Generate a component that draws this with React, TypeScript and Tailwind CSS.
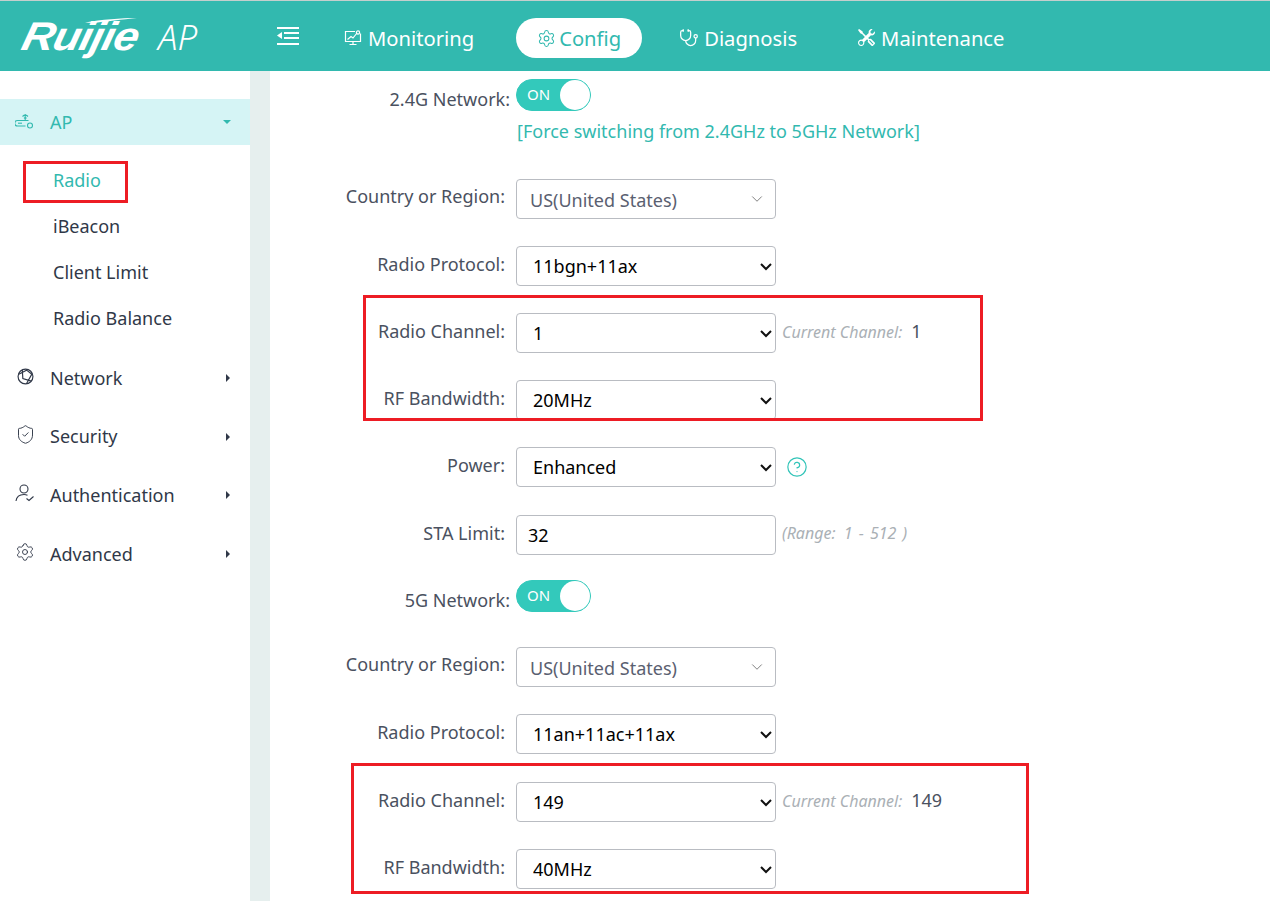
import { ChevronDown, CircleHelp, Settings, ShieldCheck, Stethoscope } from 'lucide-react'
import { BsTools } from 'react-icons/bs'

const FONT = "font-['Noto_Sans','Open_Sans',sans-serif]"

function MonitorIcon() {
  return (
    <svg width="18" height="16" viewBox="0 0 18 16" fill="none" stroke="currentColor" strokeWidth="1.2">
      <path d="M11 1.500H1.500v10h15v-8" />
      <path d="M3.500 9.500l3.500-3 2 1.500 4-5" />
      <circle cx="14" cy="2.500" r="1.600" />
      <path d="M9 11.500v3M5.500 14.500h7" />
    </svg>
  )
}

function CollapseIcon() {
  return (
    <svg width="24" height="18" viewBox="0 0 24 18" fill="white">
      <rect x="1" y="0" width="22" height="2" />
      <rect x="8" y="5" width="15" height="2" />
      <rect x="8" y="10" width="15" height="2" />
      <rect x="1" y="16" width="22" height="2" />
      <path d="M1 8.500L6 5v7z" />
    </svg>
  )
}

function LogoSwoosh() {
  return (
    <svg width="52" height="5" viewBox="0 0 52 5" fill="white">
      <path d="M0 4.500C16 1.500 36 0 52 0 38 1.500 20 3.500 8 5z" />
    </svg>
  )
}

function RouterIcon() {
  return (
    <svg width="19" height="17" viewBox="0 0 19 17" fill="none" stroke="currentColor" strokeWidth="1.100">
      <path d="M10.500 13H2.500a2.300 2.300 0 0 1 0-5.500h11" />
      <path d="M3 10.200h4" />
      <path d="M7.500 3.500a4 4 0 0 1 5.500 0M9 5.300a1.800 1.800 0 0 1 2.500 0M10.200 1v6" />
      <circle cx="15" cy="12.500" r="2.500" />
    </svg>
  )
}

function GlobeIcon() {
  return (
    <svg width="17" height="17" viewBox="0 0 16 16" fill="none" stroke="currentColor" strokeWidth="1.100">
      <circle cx="8" cy="8" r="7" />
      <path d="M5 1.800L5.500 10l8 2.300M1.200 6.200L9 2l5 3.800-5 8.800" />
    </svg>
  )
}

function UserCheckIcon() {
  return (
    <svg width="20" height="18" viewBox="0 0 20 18" fill="none" stroke="currentColor" strokeWidth="1.100">
      <circle cx="9" cy="5" r="4" />
      <path d="M1 17c.5-4 3.500-6.500 8-6.500 1.500 0 2.500.3 3.500.8" />
      <path d="M11.500 14.500l2.500 2 4.500-4" />
    </svg>
  )
}

function CaretRight() {
  return <span className="mr-[20px] ml-auto h-0 w-0 border-y-[4px] border-l-[4px] border-y-transparent border-l-[#303848]" />
}

function SideGroup({ label, icon, className }: { label: string; icon: React.ReactNode; className?: string }) {
  return (
    <div className={`flex h-[58.6px] items-center text-[#303848] ${className ?? ''}`}>
      <span className="flex w-[50px] -translate-y-[2px] justify-center">{icon}</span>
      <span>{label}</span>
      <CaretRight />
    </div>
  )
}

function FieldLabel({ children, className }: { children: string; className?: string }) {
  return <label className={`shrink-0 text-right text-[#4a5160] ${className ?? 'mt-[5px] w-[235px]'}`}>{children}</label>
}

function NativeSelect({ value }: { value: string }) {
  return (
    <div className="relative h-[40px] w-[260px] shrink-0">
      <select
        defaultValue={value}
        className="h-full w-full appearance-none rounded-[4px] border border-[#b9bcc2] bg-white pl-[16px] text-black outline-none"
      >
        <option>{value}</option>
      </select>
      <svg className="absolute top-[17px] right-[4px]" width="12" height="8" viewBox="0 0 12 8" fill="none" stroke="#111" strokeWidth="2">
        <path d="M1 1l5 5 5-5" />
      </svg>
    </div>
  )
}

function SelectRow({ label, value, note, className }: { label: string; value: string; note?: React.ReactNode; className: string }) {
  return (
    <div className={`flex h-[40px] gap-[11px] ${className}`}>
      <FieldLabel>{label + ':'}</FieldLabel>
      <NativeSelect value={value} />
      {note}
    </div>
  )
}

function CountryRow({ className }: { className: string }) {
  return (
    <div className={`flex h-[40px] gap-[11px] ${className}`}>
      <FieldLabel className="mt-[4px] w-[235px]">Country or Region:</FieldLabel>
      <div className="flex h-[40px] w-[260px] items-center justify-between rounded-[4px] border border-[#b9bcc2] bg-white pr-[9px] pl-[13px] text-[#5a6070]">
        <span className="mt-[2px]">US(United States)</span>
        <ChevronDown size={18} strokeWidth={1.100} className="text-[#666]" />
      </div>
    </div>
  )
}

function ToggleRow({ label, className }: { label: string; className?: string }) {
  return (
    <div className={`flex h-[32px] gap-[6px] ${className ?? ''}`}>
      <FieldLabel className="mt-[7px] w-[240px]">{label}</FieldLabel>
      <div className="flex h-[32px] w-[75px] items-center justify-between rounded-full border border-[#33c9bb] bg-[#33c9bb] pl-[10px] text-[15px] text-white">
        <span className="-mt-[2px]">ON</span>
        <span className="h-[30px] w-[30px] rounded-full bg-white" />
      </div>
    </div>
  )
}

function ChannelNote({ value }: { value: string }) {
  return (
    <div className="-ml-[5px] flex items-start gap-[9px]">
      <span className="mt-[7px] text-[16px] text-[#aab0b5] italic">Current Channel:</span>
      <span className="mt-[5px] text-[#4a5160]">{value}</span>
    </div>
  )
}

export default function App() {
  return (
    <div className={`${FONT} relative h-[901px] w-[1270px] overflow-hidden bg-white text-[18px]`}>
      <header className="flex h-[71px] items-center border-t border-[#c4cfcd] bg-[#32b9af] text-white">
        <div className="relative flex w-[276px] items-center pl-[23px]">
          <span className="w-[135px] origin-left scale-x-[1.120] -skew-x-12 font-['Liberation_Sans',sans-serif] text-[40px] leading-none font-black tracking-[-1px] italic">
            Ruijie
          </span>
          <span className="text-[35px] leading-none font-light italic">AP</span>
          <span className="absolute top-[2px] left-[85px] leading-none">
            <LogoSwoosh />
          </span>
        </div>
        <CollapseIcon />
        <nav className="mt-[4px] ml-[44px] flex items-center text-[20.200px]">
          <a className="flex items-center gap-[6px]">
            <MonitorIcon />
            <span>Monitoring</span>
          </a>
          <a className="ml-[42px] flex h-[40px] w-[126px] items-center justify-center gap-[3px] rounded-full bg-white text-[#32b9af]">
            <Settings size={19} strokeWidth={1.300} />
            <span>Config</span>
          </a>
          <a className="ml-[37px] flex items-center gap-[5px]">
            <Stethoscope size={20} strokeWidth={1.500} />
            <span>Diagnosis</span>
          </a>
          <a className="ml-[61px] flex items-center gap-[6px]">
            <BsTools size={17} />
            <span>Maintenance</span>
          </a>
        </nav>
      </header>

      <div className="flex h-[830px]">
        <aside className="w-[250px] shrink-0 pt-[28px]">
          <div className="flex h-[46px] items-center bg-[#d5f4f5] text-[#32b9af]">
            <span className="flex w-[50px] -translate-y-[1px] justify-center pr-[2px]">
              <RouterIcon />
            </span>
            <span>AP</span>
            <span className="mr-[19px] ml-auto h-0 w-0 border-x-[4px] border-t-[4px] border-x-transparent border-t-[#32b9af]" />
          </div>
          <ul className="mt-[12px] pl-[53px] text-[#303848]">
            <li className="flex h-[46px] items-center text-[#32b9af]">Radio</li>
            <li className="flex h-[46px] items-center">iBeacon</li>
            <li className="flex h-[46px] items-center">Client Limit</li>
            <li className="flex h-[46px] items-center">Radio Balance</li>
          </ul>
          <SideGroup className="mt-[8px]" label="Network" icon={<GlobeIcon />} />
          <SideGroup label="Security" icon={<ShieldCheck size={21} strokeWidth={1.100} />} />
          <SideGroup label="Authentication" icon={<UserCheckIcon />} />
          <SideGroup label="Advanced" icon={<Settings size={20} strokeWidth={1.100} />} />
        </aside>
        <div className="w-[20px] shrink-0 bg-[#e6efee]" />

        <main className="flex-1 pt-[8px]">
          <ToggleRow label="2.4G Network:" />
          <p className="mt-[7px] ml-[247px] text-[#32b9af]">[Force switching from 2.4GHz to 5GHz Network]</p>
          <CountryRow className="mt-[34px]" />
          <SelectRow className="mt-[27px]" label="Radio Protocol" value="11bgn+11ax" />
          <SelectRow className="mt-[27px]" label="Radio Channel" value="1" note={<ChannelNote value="1" />} />
          <SelectRow className="mt-[27px]" label="RF Bandwidth" value="20MHz" />
          <SelectRow
            className="mt-[27px]"
            label="Power"
            value="Enhanced"
            note={<CircleHelp size={22} strokeWidth={1.300} className="mt-[9px] -ml-[1px] text-[#32c4b8]" />}
          />
          <div className="mt-[28px] flex h-[40px] gap-[11px]">
            <FieldLabel>STA Limit:</FieldLabel>
            <div className="flex h-[40px] w-[260px] items-center rounded-[4px] border border-[#b9bcc2] pl-[11px] text-black">
              <span className="mt-[1px]">32</span>
            </div>
            <span className="mt-[6px] -ml-[5px] text-[16px] text-[#aab0b5] italic">
              (Range:&nbsp;&nbsp;<span className="[word-spacing:2px]">1 - 512 )</span>
            </span>
          </div>
          <ToggleRow className="mt-[25px]" label="5G Network:" />
          <CountryRow className="mt-[35px]" />
          <SelectRow className="mt-[27px]" label="Radio Protocol" value="11an+11ac+11ax" />
          <SelectRow className="mt-[28px]" label="Radio Channel" value="149" note={<ChannelNote value="149" />} />
          <SelectRow className="mt-[27px]" label="RF Bandwidth" value="40MHz" />
        </main>
      </div>

      {/* red annotation boxes on top of the screenshot */}
      <div className="absolute top-[161px] left-[23px] h-[42px] w-[105px] border-[3px] border-[#ed1c24]" />
      <div className="absolute top-[295px] left-[363px] h-[126px] w-[620px] border-[3px] border-[#ed1c24]" />
      <div className="absolute top-[763px] left-[351px] h-[131px] w-[678px] border-[3px] border-[#ed1c24]" />
    </div>
  )
}
